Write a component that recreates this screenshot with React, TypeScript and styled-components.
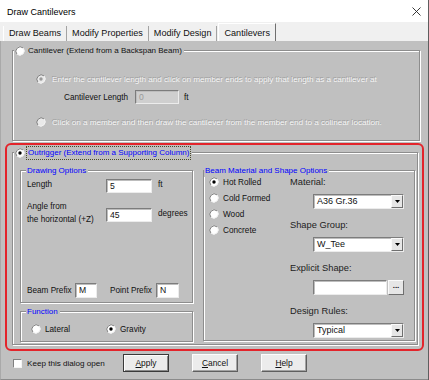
import React from "react";
import styled, { createGlobalStyle, css } from "styled-components";

const GlobalStyle = createGlobalStyle`
  html, body {
    margin: 0;
    padding: 0;
    background: #ffffff;
  }
  body {
    font-family: "Liberation Sans", Arial, sans-serif;
    color: #111;
  }
`;

const Window = styled.div`
  width: 429px;
  height: 380px;
  box-sizing: border-box;
  display: flex;
  flex-direction: column;
  background: #fff;
  border-right: 1px solid #5e5e5e;
  overflow: hidden;
`;

const TitleBar = styled.div`
  height: 22px;
  flex: none;
  display: flex;
  align-items: center;
  justify-content: space-between;
  padding: 1px 7px 0 7px;
  box-sizing: border-box;
  font-size: 9px;
  color: #000;
`;

const TabStrip = styled.div`
  height: 19px;
  flex: none;
  display: flex;
  align-items: flex-end;
  padding-left: 3px;
  background: #f0f0f0;
`;

const Tab = styled.div<{ $active?: boolean; $first?: boolean }>`
  height: 15px;
  line-height: 15px;
  padding: 0 5px 0 5px;
  font-size: 9.1px;
  color: #111;
  border-right: 1px solid #a3a3a3;
  ${(p) =>
    p.$first &&
    css`
      border-left: 1px solid #fff;
    `}
  ${(p) =>
    p.$active &&
    css`
      height: 18px;
      box-sizing: border-box;
      padding-top: 2px;
      margin-left: 1px;
      border-left: 1px solid #fff;
      border-top: 1px solid #fff;
      border-right: 1px solid #6f6f6f;
    `}
`;

const Page = styled.div`
  flex: 1;
  display: flex;
  flex-direction: column;
  background: #c0c0c0;
  border-bottom: 1px solid #8b8b8b;
  border-left: 1px solid #a9a9a9;
`;

const GroupBox = styled.div<{ $h?: number }>`
  border: 1px solid #8d8d8d;
  box-shadow: inset 1px 1px 0 #fff, 1px 1px 0 #fff;
  display: flex;
  flex-direction: column;
  box-sizing: border-box;
  ${(p) =>
    p.$h &&
    css`
      height: ${p.$h}px;
    `}
`;

const Caption = styled.div<{ $ml?: number; $blue?: boolean; $gap?: number }>`
  display: flex;
  align-items: center;
  gap: ${(p) => p.$gap ?? 4}px;
  width: fit-content;
  height: 13px;
  line-height: 13px;
  margin: -7px 0 0 ${(p) => p.$ml ?? 5}px;
  padding: 0 2px 0 1px;
  background: #c0c0c0;
  font-size: 8px;
  color: ${(p) => (p.$blue ? "#0000ff" : "#111")};
`;

const FocusText = styled.span`
  outline: 1px dotted #4a4a2a;
  outline-offset: 0;
  padding: 0 1px;
  line-height: 12px;
  color: #0000ff;
`;

const CantGroup = styled(GroupBox)`
  margin: 9px 8px 0 11px;
  padding-bottom: 12px;
`;

const OptionRow = styled.div<{ $mt: number; $pl?: number; $dim?: boolean }>`
  display: flex;
  align-items: center;
  gap: 6px;
  height: 12px;
  margin-top: ${(p) => p.$mt}px;
  padding-left: ${(p) => p.$pl ?? 23}px;
  font-size: 8.1px;
  ${(p) =>
    p.$dim &&
    css`
      color: #f6f6f6;
      text-shadow: -0.6px -0.6px 0 #9e9e9e;
    `}
`;

const FieldRow = styled.div<{ $mt: number; $h?: number; $pl?: number }>`
  display: flex;
  align-items: center;
  height: ${(p) => p.$h ?? 14}px;
  margin-top: ${(p) => p.$mt}px;
  padding-left: ${(p) => p.$pl ?? 0}px;
  font-size: 8.2px;
`;

const Label = styled.div<{ $w?: number; $lift?: boolean }>`
  width: ${(p) => (p.$w ? `${p.$w}px` : "auto")};
  flex: none;
  line-height: 13px;
  white-space: nowrap;
  ${(p) =>
    p.$lift &&
    css`
      margin-top: -4px;
    `}
`;

const Unit = styled.div<{ $ml?: number; $lift?: boolean }>`
  margin-left: ${(p) => p.$ml ?? 6}px;
  ${(p) =>
    p.$lift &&
    css`
      margin-top: -4px;
    `}
`;

const TextBox = styled.div<{ $w: number; $h?: number; $disabled?: boolean; $ml?: number }>`
  width: ${(p) => p.$w}px;
  height: ${(p) => p.$h ?? 14}px;
  box-sizing: border-box;
  flex: none;
  margin-left: ${(p) => p.$ml ?? 0}px;
  background: ${(p) => (p.$disabled ? "#cfcfcf" : "#fff")};
  border: 1px solid;
  border-color: #7c7c7c #ececec #ececec #7c7c7c;
  box-shadow: inset 1px 1px 0 #bdbdbd;
  padding-left: 3px;
  font-size: 8.6px;
  line-height: 12px;
  color: ${(p) => (p.$disabled ? "#9a9a9a" : "#111")};
`;

const RedFrame = styled.div`
  margin: 2px 4px 0 4px;
  border: 2px solid #e3242b;
  border-radius: 6px;
  display: flex;
  flex-direction: column;
`;

const OutGroup = styled(GroupBox)`
  margin: 7px 4px 4px 5px;
`;

const Columns = styled.div`
  display: grid;
  grid-template-columns: 173px 212px;
  column-gap: 10px;
  margin-top: 11px;
  padding: 0 3px 2px 7px;
`;

const LeftCol = styled.div`
  display: flex;
  flex-direction: column;
  gap: 8px;
`;

const DrawBody = styled.div`
  flex: 1;
  display: flex;
  flex-direction: column;
  padding: 0 0 4px 6px;
`;

const BeamGrid = styled.div`
  display: grid;
  grid-template-columns: 81px 114px;
  margin-top: -1px;
  padding-left: 5px;
`;

const RadioList = styled.div`
  display: flex;
  flex-direction: column;
  gap: 4px;
`;

const RadioItem = styled.div<{ $w?: number }>`
  display: flex;
  align-items: center;
  gap: 4px;
  height: 12px;
  font-size: 8.2px;
  ${(p) =>
    p.$w &&
    css`
      width: ${p.$w}px;
    `}
`;

const FieldStack = styled.div`
  display: flex;
  flex-direction: column;
`;

const Field = styled.div`
  height: 43px;
  display: flex;
  flex-direction: column;
`;

const FieldLabel = styled.div`
  height: 12px;
  line-height: 12px;
  font-size: 9.3px;
  color: #222;
  margin-bottom: 6px;
`;

const Combo = styled.div`
  margin-left: 23px;
  width: 91px;
  height: 15px;
  box-sizing: border-box;
  display: flex;
  background: #fff;
  border: 1px solid;
  border-color: #7c7c7c #ececec #ececec #7c7c7c;
  box-shadow: inset 1px 1px 0 #bdbdbd;
`;

const ComboText = styled.div`
  flex: 1;
  padding-left: 3px;
  font-size: 9px;
  line-height: 13px;
  color: #111;
`;

const ArrowBtn = styled.div<{ $w?: number }>`
  width: ${(p) => p.$w ?? 12}px;
  flex: none;
  box-sizing: border-box;
  display: flex;
  align-items: center;
  justify-content: center;
  background: #e6e6e6;
  border: 1px solid;
  border-color: #fafafa #6f6f6f #6f6f6f #fafafa;
  font-size: 8px;
  line-height: 8px;
  color: #111;
`;

const ShapeRow = styled.div`
  margin-left: 23px;
  display: flex;
  height: 15px;
`;

const EllipsisBtn = styled(ArrowBtn)`
  margin-left: 1px;
  padding-bottom: 3px;
  font-weight: bold;
`;

const FuncRow = styled.div`
  display: flex;
  margin-top: 5px;
  padding-left: 10px;
`;

const Footer = styled.div`
  display: grid;
  grid-template-columns: 87px 46px 46px 46px;
  column-gap: 23px;
  margin-top: 3px;
  padding-left: 12px;
  height: 18px;
`;

const KeepOpen = styled.div`
  display: flex;
  align-items: center;
  gap: 5px;
  font-size: 8.1px;
  white-space: nowrap;
`;

const CheckBox = styled.div`
  width: 9px;
  height: 9px;
  flex: none;
  box-sizing: border-box;
  background: #fff;
  border: 1px solid;
  border-color: #808080 #f4f4f4 #f4f4f4 #808080;
`;

const Button = styled.div<{ $default?: boolean }>`
  height: 18px;
  box-sizing: border-box;
  display: flex;
  align-items: center;
  justify-content: center;
  background: #ececec;
  border: 1px solid;
  border-color: #fdfdfd #5f5f5f #5f5f5f #fdfdfd;
  box-shadow: inset -1px -1px 0 #a3a3a3;
  font-size: 8.4px;
  color: #111;
  ${(p) =>
    p.$default &&
    css`
      border-color: #3a3a3a;
      box-shadow: inset 1px 1px 0 #fdfdfd, inset -1px -1px 0 #8a8a8a;
    `}
`;

const RadioSvg = styled.svg`
  flex: none;
  display: block;
`;

function Radio({ on, dim }: { on?: boolean; dim?: boolean }) {
  return (
    <RadioSvg width="10" height="10" viewBox="0 0 10 10">
      <circle cx="5" cy="5" r="4.4" fill={dim ? "#e9e9e9" : "#fff"} />
      <path d="M1.9 8.1 A4.4 4.4 0 0 1 8.1 1.9" stroke="#7d7d7d" strokeWidth="1" fill="none" />
      <path d="M8.1 1.9 A4.4 4.4 0 0 1 1.9 8.1" stroke="#f2f2f2" strokeWidth="1" fill="none" />
      {on && <circle cx="5" cy="5" r="1.7" fill={dim ? "#9a9a9a" : "#000"} />}
    </RadioSvg>
  );
}

function DownArrow() {
  return (
    <svg width="5" height="3" viewBox="0 0 5 3">
      <path d="M0 0 H5 L2.5 3 Z" fill="#000" />
    </svg>
  );
}

function Select({ value }: { value: string }) {
  return (
    <Combo>
      <ComboText>{value}</ComboText>
      <ArrowBtn>
        <DownArrow />
      </ArrowBtn>
    </Combo>
  );
}

export default function App() {
  return (
    <>
      <GlobalStyle />
      <Window>
        <TitleBar>
          <span>Draw Cantilevers</span>
          <svg width="9" height="9" viewBox="0 0 9 9">
            <path d="M0.5 0.5 L8.5 8.5 M8.5 0.5 L0.5 8.5" stroke="#222" strokeWidth="0.9" />
          </svg>
        </TitleBar>
        <TabStrip>
          <Tab $first>Draw Beams</Tab>
          <Tab>Modify Properties</Tab>
          <Tab>Modify Design</Tab>
          <Tab $active>Cantilevers</Tab>
        </TabStrip>
        <Page>
          <CantGroup>
            <Caption $ml={1} $gap={3}>
              <Radio />
              <span>Cantilever (Extend from a Backspan Beam)</span>
            </Caption>
            <OptionRow $mt={16} $dim>
              <Radio on dim />
              <span>
                Enter the cantilever length and click on member ends to apply that length as a cantilever at
              </span>
            </OptionRow>
            <FieldRow $mt={5} $pl={51}>
              <Label $w={71}>Cantilever Length</Label>
              <TextBox $w={44} $disabled>
                0
              </TextBox>
              <Unit $ml={5}>ft</Unit>
            </FieldRow>
            <OptionRow $mt={12} $dim>
              <Radio dim />
              <span>Click on a member and then draw the cantilever from the member end to a colinear location.</span>
            </OptionRow>
          </CantGroup>

          <RedFrame>
            <OutGroup>
              <Caption $ml={1} $gap={2}>
                <Radio on />
                <FocusText>Outrigger (Extend from a Supporting Column)</FocusText>
              </Caption>
              <Columns>
                <LeftCol>
                  <GroupBox $h={133}>
                    <Caption $ml={5} $blue>
                      Drawing Options
                    </Caption>
                    <DrawBody>
                      <FieldRow $mt={2}>
                        <Label $w={79} $lift>
                          Length
                        </Label>
                        <TextBox $w={46}>5</TextBox>
                        <Unit $lift>ft</Unit>
                      </FieldRow>
                      <FieldRow $mt={15}>
                        <Label $w={79} $lift>
                          Angle from
                          <br />
                          the horizontal (+Z)
                        </Label>
                        <TextBox $w={46}>45</TextBox>
                        <Unit $lift>degrees</Unit>
                      </FieldRow>
                      <FieldRow $mt={0} $h={15} style={{ marginTop: "auto" }}>
                        <Label $w={48}>Beam Prefix</Label>
                        <TextBox $w={22} $h={15}>
                          M
                        </TextBox>
                        <Label $w={46} style={{ marginLeft: 13 }}>
                          Point Prefix
                        </Label>
                        <TextBox $w={23} $h={15}>
                          N
                        </TextBox>
                      </FieldRow>
                    </DrawBody>
                  </GroupBox>
                  <GroupBox $h={31}>
                    <Caption $ml={5} $blue>
                      Function
                    </Caption>
                    <FuncRow>
                      <RadioItem $w={75}>
                        <Radio />
                        <span>Lateral</span>
                      </RadioItem>
                      <RadioItem>
                        <Radio on />
                        <span>Gravity</span>
                      </RadioItem>
                    </FuncRow>
                  </GroupBox>
                </LeftCol>

                <GroupBox $h={171}>
                  <Caption $ml={0} $blue>
                    Beam Material and Shape Options
                  </Caption>
                  <BeamGrid>
                    <RadioList>
                      <RadioItem>
                        <Radio on />
                        <span>Hot Rolled</span>
                      </RadioItem>
                      <RadioItem>
                        <Radio />
                        <span>Cold Formed</span>
                      </RadioItem>
                      <RadioItem>
                        <Radio />
                        <span>Wood</span>
                      </RadioItem>
                      <RadioItem>
                        <Radio />
                        <span>Concrete</span>
                      </RadioItem>
                    </RadioList>
                    <FieldStack>
                      <Field>
                        <FieldLabel>Material:</FieldLabel>
                        <Select value="A36 Gr.36" />
                      </Field>
                      <Field>
                        <FieldLabel>Shape Group:</FieldLabel>
                        <Select value="W_Tee" />
                      </Field>
                      <Field>
                        <FieldLabel>Explicit Shape:</FieldLabel>
                        <ShapeRow>
                          <TextBox $w={74} $h={15} />
                          <EllipsisBtn $w={16}>...</EllipsisBtn>
                        </ShapeRow>
                      </Field>
                      <Field>
                        <FieldLabel>Design Rules:</FieldLabel>
                        <Select value="Typical" />
                      </Field>
                    </FieldStack>
                  </BeamGrid>
                </GroupBox>
              </Columns>
            </OutGroup>
          </RedFrame>

          <Footer>
            <KeepOpen>
              <CheckBox />
              <span>Keep this dialog open</span>
            </KeepOpen>
            <Button $default>
              <span>
                <u>A</u>pply
              </span>
            </Button>
            <Button>
              <span>
                <u>C</u>ancel
              </span>
            </Button>
            <Button>
              <span>
                <u>H</u>elp
              </span>
            </Button>
          </Footer>
        </Page>
      </Window>
    </>
  );
}
